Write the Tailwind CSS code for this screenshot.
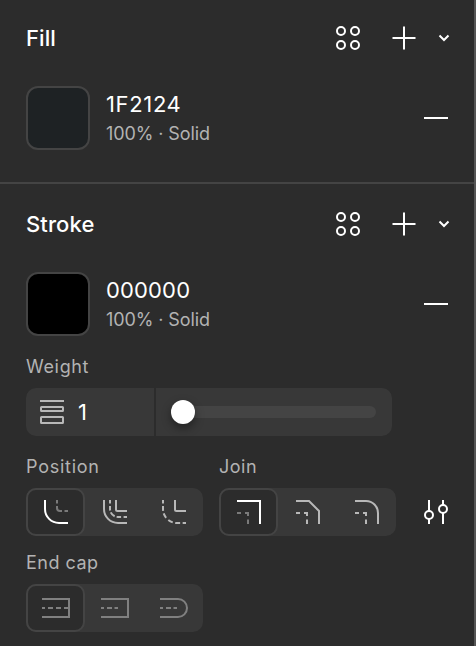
<!DOCTYPE html>
<html lang="en">
  <head>
    <meta charset="UTF-8" />
    <meta name="viewport" content="width=device-width, initial-scale=1.0" />
    <title>Fill and Stroke</title>
    <script src="https://cdn.jsdelivr.net/npm/@tailwindcss/browser@4"></script>
  </head>
  <body class="bg-[#2c2c2c]">
    <!-- Shared icons -->
    <svg class="hidden">
      <symbol id="styles" viewBox="0 0 24 24">
        <g fill="none" stroke="currentColor" stroke-width="2">
          <circle cx="5" cy="5" r="4" />
          <circle cx="19" cy="5" r="4" />
          <circle cx="5" cy="19" r="4" />
          <circle cx="19" cy="19" r="4" />
        </g>
      </symbol>
      <symbol id="plus" viewBox="0 0 24 24">
        <path d="M.5 12h23M12 .5v23" fill="none" stroke="currentColor" stroke-width="2" />
      </symbol>
      <symbol id="chevron" viewBox="0 0 12 8">
        <path d="M1.500 1.500 6 6l4.500-4.500" fill="none" stroke="currentColor" stroke-width="2" />
      </symbol>
    </svg>

    <div
      class="h-[646px] w-[476px] overflow-hidden border-r-2 border-[#555555] bg-[#2c2c2c] font-['Inter',sans-serif] text-white"
    >
      <!-- Fill -->
      <section class="h-[184px] border-b-2 border-[#444444] pr-[24px] pl-[26px]">
        <div class="flex h-[76px] items-center">
          <h2 class="flex-1 text-[22px] font-medium tracking-[0.1px]">Fill</h2>
          <svg class="mr-8 size-6"><use href="#styles" /></svg>
          <svg class="mr-[22px] size-6"><use href="#plus" /></svg>
          <svg class="h-2 w-3"><use href="#chevron" /></svg>
        </div>
        <div class="mt-[10px] flex h-16 items-center">
          <div class="size-16 rounded-xl border-2 border-[#444444] bg-[#1e2224]"></div>
          <div class="ml-4 flex-1 pb-[2px]">
            <div class="text-[22px] leading-[32px] tracking-[0.65px]">1F2124</div>
            <div class="text-[18px] leading-[27px] tracking-[-0.1px] text-[#b3b3b3]">100% · Solid</div>
          </div>
          <div class="mr-[2px] h-[2px] w-6 bg-white"></div>
        </div>
      </section>

      <!-- Stroke -->
      <section class="pr-[24px] pl-[26px]">
        <div class="flex h-20 items-center">
          <h2 class="flex-1 text-[22px] font-medium tracking-[0.1px]">Stroke</h2>
          <svg class="mr-8 size-6"><use href="#styles" /></svg>
          <svg class="mr-[22px] size-6"><use href="#plus" /></svg>
          <svg class="h-2 w-3"><use href="#chevron" /></svg>
        </div>
        <div class="mt-2 flex h-16 items-center">
          <div class="size-16 rounded-xl border-2 border-[#444444] bg-black"></div>
          <div class="ml-4 flex-1 pb-[2px]">
            <div class="text-[22px] leading-[32px] tracking-[0.15px]">000000</div>
            <div class="text-[18px] leading-[27px] tracking-[-0.1px] text-[#b3b3b3]">100% · Solid</div>
          </div>
          <div class="mr-[2px] h-[2px] w-6 bg-white"></div>
        </div>

        <!-- Weight -->
        <div class="mt-4 text-[18px] leading-[30px] tracking-[0.65px] text-[#b3b3b3]">Weight</div>
        <div class="mt-[6px] flex h-12 w-[366px] overflow-hidden rounded-[10px] bg-[#383838]">
          <div class="flex w-[130px] items-center border-r-2 border-[#2c2c2c] pl-[14px]">
            <svg class="size-6" viewBox="0 0 24 24" fill="none" stroke="#b8b8b8" stroke-width="2">
              <path d="M0 1h24" />
              <rect x="1" y="7" width="22" height="4" rx=".5" />
              <rect x="1" y="17" width="22" height="6" rx=".5" />
            </svg>
            <span class="ml-[14px] text-[22px]">1</span>
          </div>
          <div class="flex flex-1 items-center pr-4 pl-[15px]">
            <div class="flex h-3 flex-1 items-center rounded-full bg-[#444444]">
              <div class="size-6 rounded-full bg-white shadow-[0_4px_10px_rgba(0,0,0,0.4)]"></div>
            </div>
          </div>
        </div>

        <!-- Position and join -->
        <div class="mt-4 flex">
          <div class="w-[193px]">
            <div class="text-[18px] leading-[30px] tracking-[0.75px] text-[#b3b3b3]">Position</div>
            <div class="mt-[6px] flex h-12 w-[177px] rounded-[10px] bg-[#383838]">
              <button class="w-[59px] rounded-[10px] border-2 border-[#444444] bg-[#2c2c2c] pl-4">
                <svg class="size-6" viewBox="0 0 24 24" fill="none" stroke="white" stroke-width="2">
                  <path d="M1 0v9a14 14 0 0 0 14 14h9" />
                  <path d="M13 0v3.500M13 6v2a3 3 0 0 0 3 3h2M20.500 11h3.500" stroke="#7a7a7a" />
                </svg>
              </button>
              <button class="w-[59px] pl-[18px]">
                <svg class="size-6" viewBox="0 0 24 24" fill="none" stroke="#b8b8b8" stroke-width="2">
                  <path d="M1 0v9a14 14 0 0 0 14 14h9" />
                  <path d="M7 0v9a8 8 0 0 0 8 8h9" stroke-dasharray="3.500 2.500 4.500 2 5.570 2 4.500 2.500 3.500 0" />
                  <path d="M13 0v9.500q0 1.500 1.500 1.500h9.500" />
                </svg>
              </button>
              <button class="w-[59px] pl-[18px]">
                <svg class="size-6" viewBox="0 0 24 24" fill="none" stroke="#b8b8b8" stroke-width="2">
                  <path d="M1 0v9a14 14 0 0 0 14 14h9" stroke-dasharray="3.500 2.500 5 2.500 5 3 5 2.500 5 2.500 3.500 0" />
                  <path d="M13 0v9.500q0 1.500 1.500 1.500h9.500" />
                </svg>
              </button>
            </div>
          </div>
          <div class="w-[177px]">
            <div class="text-[18px] leading-[30px] tracking-[0.5px] text-[#b3b3b3]">Join</div>
            <div class="mt-[6px] flex h-12 w-[177px] rounded-[10px] bg-[#383838]">
              <button class="w-[59px] rounded-[10px] border-2 border-[#444444] bg-[#2c2c2c] pl-4">
                <svg class="size-6" viewBox="0 0 24 24" fill="none" stroke="white" stroke-width="2">
                  <path d="M0 1h23v23" />
                  <path d="M0 13h4M8 13h3v3M11 19.500v4.500" stroke="#7a7a7a" />
                </svg>
              </button>
              <button class="w-[59px] pl-[18px]">
                <svg class="size-6" viewBox="0 0 24 24" fill="none" stroke="#b8b8b8" stroke-width="2">
                  <path d="M0 1h13l10 10v13" />
                  <path d="M0 13h4M8 13h3v3M11 19.500v4.500" />
                </svg>
              </button>
              <button class="w-[59px] pl-[18px]">
                <svg class="size-6" viewBox="0 0 24 24" fill="none" stroke="#b8b8b8" stroke-width="2">
                  <path d="M0 1h11a12 12 0 0 1 12 12v11" />
                  <path d="M0 13h4M8 13h3v3M11 19.500v4.500" />
                </svg>
              </button>
            </div>
          </div>
          <svg class="mt-12 ml-7 size-6" viewBox="0 0 24 24" fill="none" stroke="white" stroke-width="2">
            <path d="M5 0v11M5 19v5M19 0v5M19 13v11" />
            <circle cx="5" cy="15" r="4" />
            <circle cx="19" cy="9" r="4" />
          </svg>
        </div>

        <!-- End cap -->
        <div class="mt-3 text-[18px] leading-[30px] tracking-[0.5px] text-[#b3b3b3]">End cap</div>
        <div class="mt-[6px] flex h-12 w-[177px] rounded-[10px] bg-[#383838]">
          <button class="w-[59px] rounded-[10px] border-2 border-[#444444] bg-[#2c2c2c] pl-[14px]">
            <svg class="h-5 w-7" viewBox="0 0 28 20" fill="none" stroke="#808080" stroke-width="2">
              <path d="M0 1h27v18H0" />
              <path d="M0 10h3M6 10h5M14 10h5M22 10h5" />
            </svg>
          </button>
          <button class="w-[59px] pl-4">
            <svg class="h-5 w-7" viewBox="0 0 28 20" fill="none" stroke="#808080" stroke-width="2">
              <path d="M0 1h27v18H0" />
              <path d="M0 10h3M6 10h5M13.500 10h3.500" />
            </svg>
          </button>
          <button class="w-[59px] pl-4">
            <svg class="h-5 w-7" viewBox="0 0 28 20" fill="none" stroke="#808080" stroke-width="2">
              <path d="M0 1h18a9 9 0 0 1 0 18H0" />
              <path d="M0 10h3M6 10h5M13.500 10h3.500" />
            </svg>
          </button>
        </div>
      </section>
    </div>
  </body>
</html>
